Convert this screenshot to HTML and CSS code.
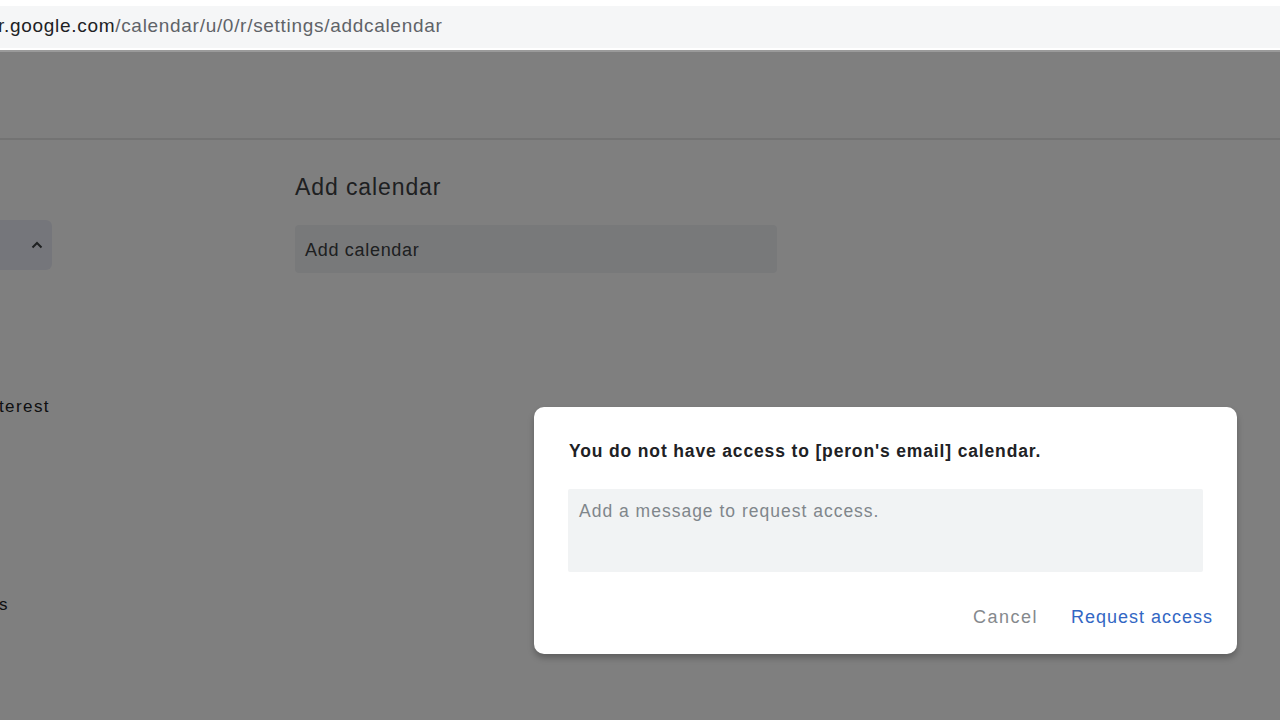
FILE: index.html
```html
<!DOCTYPE html>
<html>
<head>
<meta charset="utf-8">
<link rel="stylesheet" href="styles.css">
</head>
<body>
<div class="browser">
  <div class="urlbar"><span class="host">r.google.com</span><span class="path">/calendar/u/0/r/settings/addcalendar</span></div>
</div>
<div class="app">
  <div class="header"></div>
  <div class="content">
    <div class="sidebar">
      <div class="side-item">
        <svg class="chev" width="14" height="14" viewBox="0 0 14 14"><path d="M2.5 9.5 L7 5 L11.5 9.5" fill="none" stroke="#3c4043" stroke-width="2"/></svg>
      </div>
      <div class="side-text t1">terest</div>
      <div class="side-text t2">s</div>
    </div>
    <div class="main">
      <h2 class="title">Add calendar</h2>
      <div class="field">Add calendar</div>
    </div>
  </div>
  <div class="scrim"></div>
  <div class="dialog">
    <div class="dlg-title">You do not have access to [peron's email] calendar.</div>
    <div class="dlg-input">Add a message to request access.</div>
    <div class="dlg-actions">
      <span class="btn cancel">Cancel</span>
      <span class="btn primary">Request access</span>
    </div>
  </div>
</div>
</body>
</html>
```
FILE: styles.css
```css
* { box-sizing: border-box; }
html, body { margin: 0; padding: 0; }
body {
  width: 1280px;
  height: 720px;
  overflow: hidden;
  font-family: "Liberation Sans", Arial, sans-serif;
  background: #ffffff;
  position: relative;
}
.browser {
  height: 52px;
  background: #ffffff;
  padding-top: 6px;
  border-bottom: 2px solid #9a9a9a;
}
.urlbar {
  height: 42px;
  background: #f5f6f7;
  display: flex;
  align-items: center;
  font-size: 19px;
  letter-spacing: 0.7px;
  margin-left: -2px;
  padding-bottom: 2px;
}
.host { color: #202124; }
.path { color: #5f6368; }
.app {
  position: absolute;
  top: 52px;
  left: 0;
  width: 1280px;
  height: 668px;
}
.header {
  height: 88px;
  border-bottom: 2px solid #e6e6e6;
}
.content {
  display: flex;
}
.sidebar {
  width: 295px;
  padding-top: 80px;
}
.side-item {
  width: 52px;
  height: 50px;
  background: #ebedf7;
  border-radius: 0 6px 6px 0;
  display: flex;
  align-items: center;
  justify-content: flex-end;
  padding-right: 8px;
}
.side-text {
  font-size: 17px;
  letter-spacing: 1.4px;
  color: #202124;
  margin-left: -1px;
}
.t1 { margin-top: 127px; }
.t2 { margin-top: 178px; }
.main {
  padding-top: 33px;
}
.title {
  margin: 0;
  font-weight: 400;
  font-size: 23px;
  letter-spacing: 0.9px;
  color: #3c4043;
  line-height: 28px;
}
.field {
  margin-top: 24px;
  width: 482px;
  height: 48px;
  background: #f1f3f4;
  border-radius: 4px;
  display: flex;
  align-items: center;
  padding-left: 10px;
  padding-top: 2px;
  font-size: 18px;
  letter-spacing: 0.7px;
  color: #3c4043;
}
.scrim {
  position: absolute;
  left: 0; top: 0;
  width: 1280px; height: 668px;
  background: rgba(0,0,0,0.5);
}
.dialog {
  position: absolute;
  left: 534px;
  top: 355px;
  width: 703px;
  height: 247px;
  background: #ffffff;
  border-radius: 10px;
  box-shadow: 0 4px 6px rgba(0,0,0,0.25);
  padding: 33px 34px 0 34px;
}
.dlg-title {
  font-size: 17.5px;
  font-weight: 700;
  letter-spacing: 0.85px;
  color: #202124;
  line-height: 22px;
  margin-left: 1px;
}
.dlg-input {
  margin-top: 27px;
  width: 635px;
  height: 83px;
  background: #f1f3f4;
  border-radius: 2px;
  padding: 12px 11px;
  font-size: 17.5px;
  letter-spacing: 1px;
  color: #80868b;
}
.dlg-actions {
  display: flex;
  justify-content: flex-end;
  align-items: center;
  gap: 33px;
  margin-top: 35px;
  margin-right: -10px;
}
.btn {
  font-size: 18px;
  letter-spacing: 1px;
}
.cancel { color: #85898d; letter-spacing: 1.5px; }
.primary { color: #3367c4; }
```
